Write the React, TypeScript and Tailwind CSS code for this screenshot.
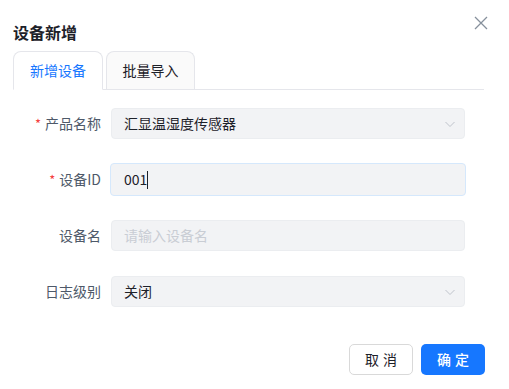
import React from "react";

const font = { fontFamily: '"Noto Sans CJK SC", "Noto Sans", sans-serif' };

function Chevron() {
  return (
    <svg width="12" height="12" viewBox="0 0 12 12" className="text-[#c0c4cc]">
      <path d="M1.5 4 L6 8.5 L10.5 4" fill="none" stroke="currentColor" strokeWidth="1" />
    </svg>
  );
}

function Row({ label, required, children }: { label: string; required?: boolean; children: React.ReactNode }) {
  return (
    <div className="flex items-center h-[31px]">
      <label className="w-[98px] pr-[10px] text-right text-[14px] text-[#4e5969] flex justify-end items-center">
        {required && <span className="text-[#f53f3f] mr-[4px] text-[13px]">*</span>}
        {label}
      </label>
      {children}
    </div>
  );
}

export default function App() {
  return (
    <div className="relative w-[509px] h-[389px] bg-white text-[#1d2129] overflow-hidden" style={font}>
      <div className="flex items-center justify-between pl-[13px] pr-[21px] pt-[20px] h-[44px]">
        <h2 className="text-[16px] font-bold leading-[24px] text-[#1d2129]">设备新增</h2>
        <svg width="14" height="14" viewBox="0 0 14 14" className="text-[#86909c] -mt-[18px]">
          <path d="M1 1 L13 13 M13 1 L1 13" stroke="currentColor" strokeWidth="1.3" />
        </svg>
      </div>

      <div className="flex ml-[13px] mr-[25px] mt-[7px] border-b border-[#e5e6eb] h-[39px]">
        <div className="w-[90px] h-[39px] bg-white border border-[#e5e6eb] border-b-white rounded-t-[8px] flex items-center justify-center text-[14px] text-[#1677ff]">
          新增设备
        </div>
        <div className="ml-[3px] w-[89px] h-[38px] bg-[#fafafa] border border-[#e5e6eb] border-b-0 rounded-t-[8px] flex items-center justify-center text-[14px] text-[#1d2129]">
          批量导入
        </div>
      </div>

      <div className="ml-[13px] mt-[18px] flex flex-col gap-[25px]">
        <Row label="产品名称" required>
          <div className="w-[354px] h-[31px] bg-[#f2f3f5] border border-[#ebedf0] rounded-[4px] flex items-center justify-between pl-[12px] pr-[8px] text-[14px] text-[#1d2129]">
            <span>汇显温湿度传感器</span>
            <Chevron />
          </div>
        </Row>
        <Row label="设备ID" required>
          <div className="w-[356px] h-[33px] -ml-[1px] bg-[#f2f3f5] border border-[#d5e8fc] rounded-[4px] flex items-center pl-[13px] text-[14px] text-[#1d2129]">
            <span>001</span>
            <span className="w-[1px] h-[18px] bg-[#1d2129]" />
          </div>
        </Row>
        <Row label="设备名">
          <div className="w-[354px] h-[31px] bg-[#f2f3f5] border border-[#ebedf0] rounded-[4px] flex items-center pl-[12px] text-[14px] text-[#c9cdd4]">
            请输入设备名
          </div>
        </Row>
        <Row label="日志级别">
          <div className="w-[354px] h-[31px] bg-[#f2f3f5] border border-[#ebedf0] rounded-[4px] flex items-center justify-between pl-[12px] pr-[8px] text-[14px] text-[#1d2129]">
            <span>关闭</span>
            <Chevron />
          </div>
        </Row>
      </div>

      <div className="flex justify-end gap-[8px] pr-[24px] mt-[37px]">
        <button className="w-[64px] h-[31px] rounded-[5px] border border-[#d9d9d9] bg-white text-[14px] text-[#1d2129] tracking-[4px] pl-[4px]">
          取消
        </button>
        <button className="w-[64px] h-[31px] rounded-[5px] bg-[#1677ff] text-[14px] text-white font-medium tracking-[4px] pl-[4px]">
          确定
        </button>
      </div>
    </div>
  );
}
